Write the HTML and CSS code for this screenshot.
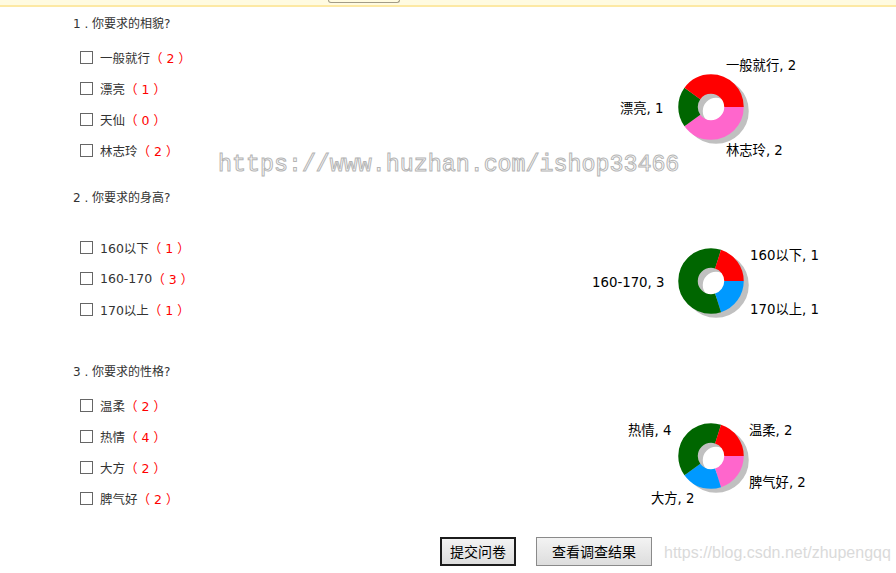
FILE: index.html
```html
<!DOCTYPE html>
<html lang="zh-CN">
<head>
    <meta charset="UTF-8">
    <title>问卷调查</title>
    <link rel="stylesheet" href="styles.css">
</head>
<body>
    <div class="topbar"><span class="tab"></span></div>
    <div class="survey">
        <div class="question">
            <div class="q-title">1 . 你要求的相貌?</div>
            <div class="q-body">
                <ul class="options">
                    <li><span class="box"></span>一般就行<span class="count">（ 2 ）</span></li>
                    <li><span class="box"></span>漂亮<span class="count">（ 1 ）</span></li>
                    <li><span class="box"></span>天仙<span class="count">（ 0 ）</span></li>
                    <li><span class="box"></span>林志玲<span class="count">（ 2 ）</span></li>
                </ul>
                <svg class="chart" width="300" height="130" viewBox="0 0 300 130">
                    <circle class="shadow" cx="163" cy="72" r="23" />
                    <circle class="seg pink" cx="158" cy="68" r="23" pathLength="360" stroke-dasharray="144 360" stroke-dashoffset="0" />
                    <circle class="seg green" cx="158" cy="68" r="23" pathLength="360" stroke-dasharray="72 360" stroke-dashoffset="-144" />
                    <circle class="seg red" cx="158" cy="68" r="23" pathLength="360" stroke-dasharray="144 360" stroke-dashoffset="-216" />
                    <text class="lbl" x="173" y="31">一般就行, 2</text>
                    <text class="lbl" x="67" y="74">漂亮, 1</text>
                    <text class="lbl" x="173" y="116">林志玲, 2</text>
                </svg>
            </div>
        </div>

        <div class="question">
            <div class="q-title">2 . 你要求的身高?</div>
            <div class="q-body">
                <ul class="options">
                    <li><span class="box"></span>160以下<span class="count">（ 1 ）</span></li>
                    <li><span class="box"></span>160-170<span class="count">（ 3 ）</span></li>
                    <li><span class="box"></span>170以上<span class="count">（ 1 ）</span></li>
                </ul>
                <svg class="chart" width="300" height="130" viewBox="0 0 300 130">
                    <circle class="shadow" cx="163" cy="72" r="23" />
                    <circle class="seg blue" cx="158" cy="68" r="23" pathLength="360" stroke-dasharray="72 360" stroke-dashoffset="0" />
                    <circle class="seg green" cx="158" cy="68" r="23" pathLength="360" stroke-dasharray="216 360" stroke-dashoffset="-72" />
                    <circle class="seg red" cx="158" cy="68" r="23" pathLength="360" stroke-dasharray="72 360" stroke-dashoffset="-288" />
                    <text class="lbl" x="197" y="47">160以下, 1</text>
                    <text class="lbl" x="39" y="74">160-170, 3</text>
                    <text class="lbl" x="197" y="101">170以上, 1</text>
                </svg>
            </div>
        </div>

        <div class="question">
            <div class="q-title">3 . 你要求的性格?</div>
            <div class="q-body">
                <ul class="options">
                    <li><span class="box"></span>温柔<span class="count">（ 2 ）</span></li>
                    <li><span class="box"></span>热情<span class="count">（ 4 ）</span></li>
                    <li><span class="box"></span>大方<span class="count">（ 2 ）</span></li>
                    <li><span class="box"></span>脾气好<span class="count">（ 2 ）</span></li>
                </ul>
                <svg class="chart" width="300" height="130" viewBox="0 0 300 130">
                    <circle class="shadow" cx="163" cy="73" r="23" />
                    <circle class="seg pink" cx="158" cy="69" r="23" pathLength="360" stroke-dasharray="72 360" stroke-dashoffset="0" />
                    <circle class="seg blue" cx="158" cy="69" r="23" pathLength="360" stroke-dasharray="72 360" stroke-dashoffset="-72" />
                    <circle class="seg green" cx="158" cy="69" r="23" pathLength="360" stroke-dasharray="144 360" stroke-dashoffset="-144" />
                    <circle class="seg red" cx="158" cy="69" r="23" pathLength="360" stroke-dasharray="72 360" stroke-dashoffset="-288" />
                    <text class="lbl" x="75" y="48">热情, 4</text>
                    <text class="lbl" x="196" y="48">温柔, 2</text>
                    <text class="lbl" x="196" y="100">脾气好, 2</text>
                    <text class="lbl" x="98" y="116">大方, 2</text>
                </svg>
            </div>
        </div>

        <div class="actions">
            <button class="btn btn-focus">提交问卷</button>
            <button class="btn btn-wide">查看调查结果</button>
            <span class="credit">https://blog.csdn.net/zhupengqq</span>
        </div>
    </div>
    <div class="watermark">https://www.huzhan.com/ishop33466</div>
</body>
</html>
```

FILE: styles.css
```css
body {
    margin: 0;
    font-family: "DejaVu Sans", "Noto Sans CJK SC", sans-serif;
    background: #fff;
    color: #333;
}
.topbar {
    height: 5px;
    background: #fffbe1;
    border-bottom: 2px solid #fde9a4;
}
.tab {
    display: block;
    margin-left: 328px;
    width: 70px;
    height: 2px;
    border: 1px solid #a39c86;
    border-top: none;
    border-radius: 0 0 5px 5px;
}
.survey {
    padding: 7px 0 0 73px;
}
.question {
    height: 162px;
    margin-bottom: 12px;
}
.q-title {
    height: 20px;
    line-height: 20px;
    font-size: 12px;
    color: #333;
}
.q-body {
    height: 142px;
    margin-top: -1px;
    display: grid;
    grid-template-columns: 480px 300px;
    align-items: center;
}
.options {
    list-style: none;
    margin: 0;
    padding: 0 0 0 7px;
}
.options li {
    height: 31px;
    display: flex;
    align-items: center;
    font-size: 12.5px;
    color: #333;
}
.box {
    width: 11px;
    height: 11px;
    border: 1px solid #666;
    margin-right: 7px;
    background: #fff;
}
.count {
    color: #ff0000;
}
.chart {
    display: block;
    overflow: visible;
}
.chart circle {
    fill: none;
    stroke-width: 19.5;
}
.shadow { stroke: #c0c0c0; }
.red { stroke: #ff0000; }
.pink { stroke: #ff66cc; }
.green { stroke: #006600; }
.blue { stroke: #0099ff; }
.lbl {
    font-family: "DejaVu Sans", "Noto Sans CJK SC", sans-serif;
    font-size: 13.3px;
    fill: #000;
}
.actions {
    display: flex;
    align-items: center;
    padding-left: 367px;
    height: 30px;
    margin-top: 1px;
}
.btn {
    height: 29px;
    width: 76px;
    padding: 0;
    font-family: "Noto Sans CJK SC", sans-serif;
    font-size: 14px;
    color: #000;
    background: linear-gradient(#f3f3f3, #dddddd);
    border: 1px solid #8a8a8a;
}
.btn-focus {
    border: 2px solid #1c1c1c;
}
.btn-wide {
    width: 116px;
    margin-left: 20px;
}
.credit {
    margin-left: 12px;
    font-family: "Liberation Sans", sans-serif;
    font-size: 16px;
    color: #dadada;
    margin-top: 4px;
}
.watermark {
    position: absolute;
    left: 218px;
    top: 152px;
    font-family: "Liberation Mono", monospace;
    font-size: 23.3px;
    color: #fff;
    -webkit-text-stroke: 1px #b4b4b4;
}
```
